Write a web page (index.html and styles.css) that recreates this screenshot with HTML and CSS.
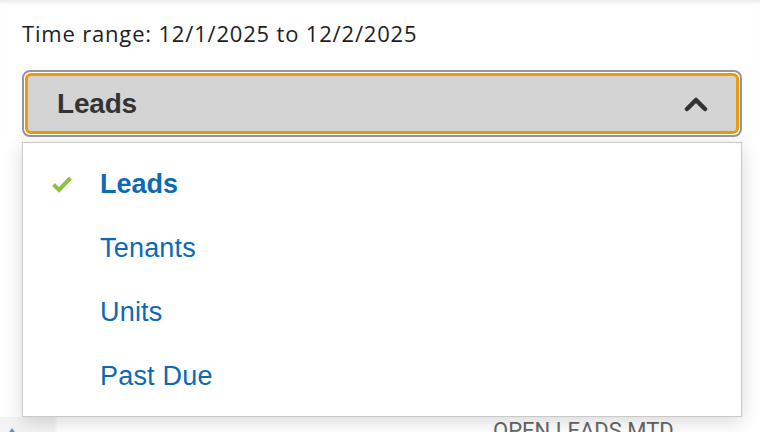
FILE: index.html
```html
<!DOCTYPE html>
<html>
<head>
<meta charset="utf-8">
<link rel="stylesheet" href="styles.css">
</head>
<body>
<div class="page">
  <div class="range">Time range: 12/1/2025 to 12/2/2025</div>
  <div class="select-wrap">
    <div class="select">
      <div class="select-inner">
        <span class="select-label">Leads</span>
        <svg class="chevron" width="24" height="16" viewBox="0 0 24 16"><path d="M3 13 L12 4 L21 13" fill="none" stroke="#333" stroke-width="4.5" stroke-linecap="round" stroke-linejoin="round"/></svg>
      </div>
    </div>
    <ul class="menu">
      <li class="item selected">
        <span class="check"><svg width="22" height="18" viewBox="0 0 22 18"><path d="M2.5 9.5 L8 15 L19.5 3" fill="none" stroke="#8cc43f" stroke-width="4"/></svg></span>
        <span class="text">Leads</span>
      </li>
      <li class="item"><span class="check"></span><span class="text">Tenants</span></li>
      <li class="item"><span class="check"></span><span class="text">Units</span></li>
      <li class="item"><span class="check"></span><span class="text">Past Due</span></li>
    </ul>
  </div>
</div>
<div class="below">
  <div class="side">
    <svg class="tri" width="10" height="7" viewBox="0 0 10 7"><path d="M5 0 L10 7 L0 7 Z" fill="#5b93d3"/></svg>
  </div>
  <div class="main">
    <div class="stat-label">OPEN LEADS MTD</div>
  </div>
</div>
</body>
</html>
```

FILE: styles.css
```css
html, body {
  margin: 0;
  padding: 0;
  background: #fff;
  overflow: hidden;
  height: 432px;
}
.page {
  padding: 18px 18px 0 22px;
  box-shadow: inset 0 5px 5px -3px rgba(0,0,0,0.10);
}
.range {
  font-family: "Open Sans", sans-serif;
  font-size: 22px;
  line-height: 30px;
  color: #1e1e1e;
  letter-spacing: 0.82px;
}
.select-wrap {
  position: relative;
  margin-top: 22px;
}
.select {
  border: 2px solid #979797;
  border-radius: 8px;
  padding: 1px;
  background: #fff;
}
.select-inner {
  height: 55px;
  border: 3px solid #e99d0d;
  border-radius: 6px;
  background: #d4d4d4;
  display: flex;
  align-items: center;
  justify-content: space-between;
  padding: 0 29px 0 29px;
}
.select-label {
  font-family: "Liberation Sans", Arial, sans-serif;
  font-weight: bold;
  font-size: 28px;
  color: #333;
  letter-spacing: -0.2px;
}
.chevron {
  display: block;
  margin-right: -1px;
}
.menu {
  position: absolute;
  top: calc(100% + 5px);
  left: 0;
  width: 718px;
  margin: 0;
  padding: 9px 0 8px 0;
  list-style: none;
  background: #fff;
  border: 1px solid #c9c9c9;
  box-shadow: 0 4px 18px rgba(0,0,0,0.16);
  z-index: 5;
}
.item {
  height: 64px;
  display: flex;
  align-items: center;
  padding-left: 28px;
  font-family: "Liberation Sans", Arial, sans-serif;
  font-size: 27px;
  letter-spacing: 0.2px;
  color: #0b6ab2;
}
.check {
  width: 22px;
  height: 18px;
  margin-right: 27px;
  display: block;
}
.check svg {
  display: block;
}
.selected .text {
  font-weight: bold;
  letter-spacing: 0;
}
.below {
  margin-top: 280px;
  display: flex;
  height: 15px;
  overflow: hidden;
}
.side {
  width: 55px;
  background: #f3f3f3;
  box-shadow: 1px 0 3px rgba(0,0,0,0.06);
}
.tri {
  display: block;
  margin: 11px 0 0 7px;
}
.main {
  flex: 1;
}
.stat-label {
  font-family: Roboto, sans-serif;
  font-size: 22px;
  color: #666;
  margin: 1px 0 0 438px;
  line-height: 26px;
}
```
